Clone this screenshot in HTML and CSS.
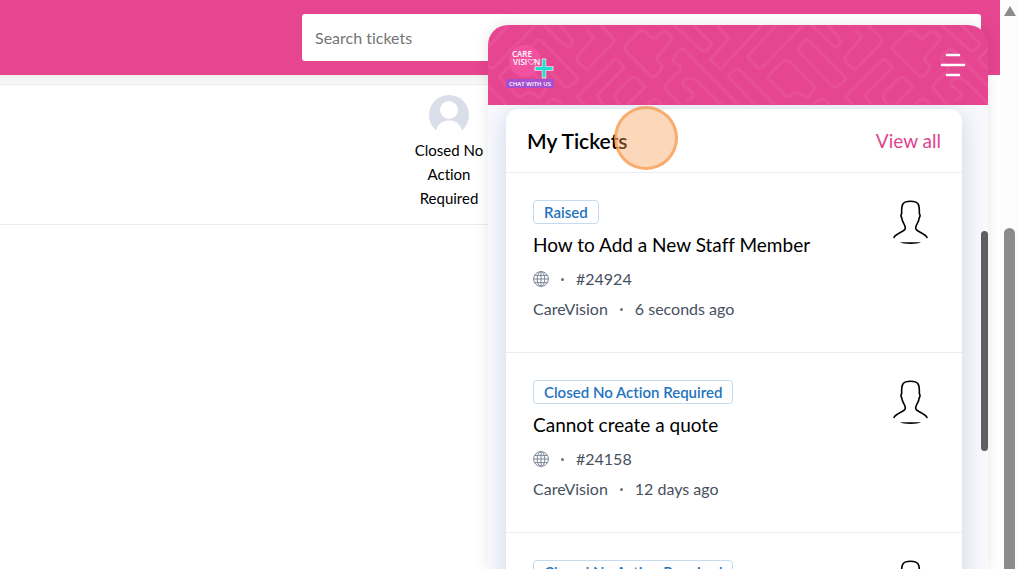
FILE: index.html
```
<!DOCTYPE html>
<html lang="en">
  <head>
    <meta charset="utf-8">
    <title>Tickets</title>
    <link rel="stylesheet" href="styles.css">
  </head>
  <body>
    <!-- shared icons -->
    <svg class="defs" aria-hidden="true">
      <symbol id="globe" viewBox="0 0 16 16">
        <g fill="none" stroke="#7e8799" stroke-width="1">
          <circle cx="8" cy="8" r="7.4" />
          <ellipse cx="8" cy="8" rx="3.8" ry="7.4" />
          <path d="M8 .6v14.8M.6 8h14.8M2 4.4h12M2 11.6h12" />
        </g>
      </symbol>
      <symbol id="person" viewBox="0 0 36 46">
        <path d="M1 37.500C3 33 11.500 32 12.300 28.500C12.700 24.500 9 22.500 8.800 18C7.900 16.500 7.900 14.500 8.700 13.500C8.200 4.500 9.500 1.200 17.500 1.200S26.800 4.500 26.300 13.500C27.100 14.500 27.100 16.500 26.200 18C26 22.500 22.300 24.500 22.700 28.500C23.500 32 32 33 34 37.500" fill="none" stroke="#000" stroke-width="1.600" stroke-linecap="round" />
        <path d="M7 42.300h21q-3 1.700-10.500 1.700t-10.500-1.700z" fill="#000" />
      </symbol>
    </svg>

    <div class="page">
      <header class="topbar">
        <input type="text" class="search" placeholder="Search tickets" aria-label="Search tickets">
      </header>
      <div class="strip"></div>
      <div class="status-row">
        <div class="status">
          <svg width="40" height="40" viewBox="0 0 40 40">
            <circle cx="20" cy="20" r="20" fill="#d9dee9" />
            <circle cx="20" cy="15" r="9" fill="#fff" />
            <path d="M7 36C9 28 14 25.500 20 25.500S31 28 33 36A20 20 0 0 1 7 36z" fill="#fff" />
          </svg>
          <span>Closed No Action Required</span>
        </div>
      </div>

      <section class="widget">
        <header class="widget-header">
          <svg class="pattern" viewBox="-756 9 1500 240" preserveAspectRatio="xMinYMin slice" aria-hidden="true">
            <g id="maze" fill="none" stroke="#fff" stroke-opacity=".06" stroke-width="10" stroke-linejoin="round">
              <path d="M110 9L30 95Q20 105 30 115L50 135Q60 142 70 133L190 9" />
              <path d="M850 249L769 165Q785 140 799 140L908 249" />
              <path d="M172 85L195 55Q203 50 212 60L315 165Q320 172 310 180L290 195Q283 198 275 190Z" />
              <path d="M215 9L280 72Q295 78 303 60Q302 50 262 9" />
              <path d="M345 25L365 45L315 105Q312 115 325 128L345 143L425 62Q430 55 420 45L385 9" />
              <path d="M460 85Q455 75 465 65L505 27Q515 22 525 35L540 48Q550 52 565 35L580 27L600 45Q602 55 570 88Q552 105 555 115L572 133L555 160Q545 168 535 160Z" />
              <path d="M85 170Q80 165 90 155L130 118Q140 112 150 120L225 195L205 225Q200 228 190 220L175 212Q165 208 150 222Q140 228 130 215Z" />
              <path d="M340 249L315 225L425 115Q432 110 440 118L458 135L375 220L395 249" />
              <path d="M445 249Q420 225 435 210L475 170Q485 162 495 170L520 195L465 249" />
              <path d="M624 249L584 205Q574 195 589 180L624 145Q629 135 619 130L604 118Q601 110 614 95L627 82Q634 80 641 87L799 249" />
              <path d="M644 235Q674 225 659 210L634 190Q627 180 639 172Q659 160 679 180L749 249" />
              <path d="M604 9L689 85Q704 90 714 75Q724 65 709 55L664 9" />
              <path d="M735 9L770 50L715 112L745 142L870 9" />
              <path d="M220 249Q245 215 270 249M525 249Q548 215 570 249" />
            </g>
            <use href="#maze" x="-804" />
            <use href="#maze" x="-1608" />
          </svg>
          <svg class="logo" width="52" height="42" viewBox="0 0 52 42" role="img" aria-label="CareVision, chat with us">
            <circle cx="19" cy="17" r="16" fill="#f0529f" />
            <g font-family="Open Sans, sans-serif" font-weight="600" fill="#fff">
              <text x="6" y="13" font-size="8">CARE</text>
              <text x="7" y="21" font-size="8">VISI</text>
              <text x="28" y="21" font-size="8">N</text>
            </g>
            <path d="M25.500 20.500C20 17 22 14 25.500 16.300C29 14 31 17 25.500 20.500z" fill="none" stroke="#fff" stroke-width=".8" />
            <path d="M38 14.500v20M28.500 24.500h19" stroke="#fff" stroke-width="4.500" stroke-opacity=".8" />
            <path d="M38 15.500v18M29.500 24.500h17" stroke="#1fe0d0" stroke-width="3" />
            <rect x="0" y="35" width="48" height="9" rx="1" fill="#a64fcf" />
            <text x="3" y="42" font-family="Open Sans, sans-serif" font-weight="600" font-size="6" fill="#fff">CHAT WITH US</text>
          </svg>
          <button class="menu-btn" aria-label="Menu">
            <svg width="26" height="24" viewBox="0 0 26 24">
              <path d="M7 2h12M2 12h22M7 22h12" stroke="#fff" stroke-width="2.600" stroke-linecap="round" />
            </svg>
          </button>
        </header>

        <div class="widget-body">
          <div class="card">
            <div class="card-head">
              <h2>My Tickets</h2>
              <a href="#">View all</a>
            </div>
            <article class="ticket">
              <div class="ticket-info">
                <span class="badge">Raised</span>
                <h3>How to Add a New Staff Member</h3>
                <p><svg width="16" height="16"><use href="#globe" /></svg><i></i>#24924</p>
                <p>CareVision<i></i>6 seconds ago</p>
              </div>
              <svg class="person" width="36" height="46"><use href="#person" /></svg>
            </article>
            <article class="ticket">
              <div class="ticket-info">
                <span class="badge">Closed No Action Required</span>
                <h3>Cannot create a quote</h3>
                <p><svg width="16" height="16"><use href="#globe" /></svg><i></i>#24158</p>
                <p>CareVision<i></i>12 days ago</p>
              </div>
              <svg class="person" width="36" height="46"><use href="#person" /></svg>
            </article>
            <article class="ticket">
              <div class="ticket-info">
                <span class="badge">Closed No Action Required</span>
              </div>
              <svg class="person" width="36" height="46"><use href="#person" /></svg>
            </article>
          </div>
          <div class="widget-thumb"></div>
        </div>
        <div class="click-marker"></div>
      </section>
    </div>

    <div class="scrollbar">
      <div class="arrow"></div>
      <div class="thumb"></div>
    </div>
  </body>
</html>
```
FILE: styles.css
```
* {
  box-sizing: border-box;
}
body {
  margin: 0;
  display: flex;
  height: 100vh;
  overflow: hidden;
  background: #fff;
  color: #000;
  font-family: Lato, sans-serif;
  font-variant-ligatures: none;
}
h2, h3, p {
  margin: 0;
}
.defs {
  position: absolute;
  width: 0;
  height: 0;
}

/* page behind the widget */
.page {
  position: relative;
  flex: 1;
  overflow: hidden;
}
.topbar {
  display: flex;
  padding: 14px 19px 14px 302px;
  background: #e64590;
}
.search {
  flex: 1;
  min-width: 0;
  height: 47px;
  padding: 0 13px;
  border: none;
  border-radius: 3px;
  background: #fff;
  font-family: Lato, sans-serif;
  font-size: 16px;
  font-variant-ligatures: none;
}
.search::placeholder {
  color: #757575;
}
.strip {
  height: 10px;
  margin-right: 12px;
  background: linear-gradient(#f1f1f1, #f9f9f9);
  border-bottom: 1px solid #ebebeb;
}
.status-row {
  margin-right: 12px;
  padding: 10px 0 14px 409px;
  border-bottom: 1px solid #e9e9ee;
}
.status {
  display: flex;
  flex-direction: column;
  align-items: center;
  gap: 3px;
  width: 80px;
  font-size: 15px;
  line-height: 24px;
  text-align: center;
}

/* chat widget */
.widget {
  position: absolute;
  top: 25px;
  right: 12px;
  bottom: 0;
  display: flex;
  flex-direction: column;
  width: 500px;
  border-radius: 20px 20px 0 0;
  box-shadow: 0 0 14px rgba(0, 0, 0, 0.1);
}
.widget-header {
  position: relative;
  flex: none;
  display: flex;
  align-items: center;
  justify-content: space-between;
  height: 80px;
  padding: 0 22px 0 18px;
  border-radius: 20px 20px 0 0;
  background: #e64590;
  overflow: hidden;
}
.pattern {
  position: absolute;
  top: 0;
  left: 0;
  width: 100%;
  height: 100%;
}
.logo,
.menu-btn {
  position: relative;
  overflow: visible;
}
.menu-btn {
  padding: 0;
  border: none;
  background: none;
  line-height: 0;
  cursor: pointer;
}
.widget-body {
  flex: 1;
  display: flex;
  gap: 19px;
  padding: 4px 0 0 18px;
  background: #f8f9fd;
  overflow: hidden;
}
.card {
  flex: 1;
  align-self: flex-start;
  border-radius: 12px;
  background: #fff;
  box-shadow: 0 4px 24px rgba(60, 90, 150, 0.22);
}
.card-head {
  display: flex;
  align-items: center;
  justify-content: space-between;
  height: 64px;
  padding: 0 21px;
  border-bottom: 1px solid #ececf0;
}
.card-head h2 {
  font-size: 21px;
  font-weight: 600;
}
.card-head a {
  color: #dd4590;
  font-size: 19px;
  text-decoration: none;
}
.ticket {
  display: flex;
  justify-content: space-between;
  height: 180px;
  padding: 27px 33px 0 27px;
  border-bottom: 1px solid #ececf0;
}
.badge {
  display: inline-block;
  padding: 0 10px;
  border: 1px solid #c5dcf0;
  border-radius: 4px;
  color: #1f73c0;
  font-size: 15px;
  font-weight: 600;
  line-height: 22px;
}
.ticket h3 {
  margin: 6px 0 4px;
  font-size: 19px;
  font-weight: 400;
  line-height: 30px;
}
.ticket p {
  display: flex;
  align-items: center;
  color: #475060;
  font-size: 16px;
  line-height: 30px;
}
.ticket p i {
  width: 3px;
  height: 3px;
  margin: 0 12px;
  border-radius: 50%;
  background: #68737d;
}
.widget-thumb {
  width: 7px;
  height: 220px;
  margin-top: 122px;
  border-radius: 4px;
  background: #5f5f5f;
}
.click-marker {
  position: absolute;
  top: 81px;
  left: 126px;
  width: 64px;
  height: 64px;
  border: 3px solid rgba(244, 150, 70, 0.65);
  border-radius: 50%;
  background: rgba(249, 155, 80, 0.4);
}

/* page scrollbar */
.scrollbar {
  display: flex;
  flex-direction: column;
  align-items: center;
  width: 19px;
  padding-top: 6px;
  background: #fcfcfc;
}
.arrow {
  border: 6px solid transparent;
  border-top: none;
  border-bottom: 10px solid #8b8b8b;
}
.thumb {
  flex: 1;
  width: 11px;
  margin-top: 212px;
  border-radius: 6px 6px 0 0;
  background: #8b8b8b;
}
```
